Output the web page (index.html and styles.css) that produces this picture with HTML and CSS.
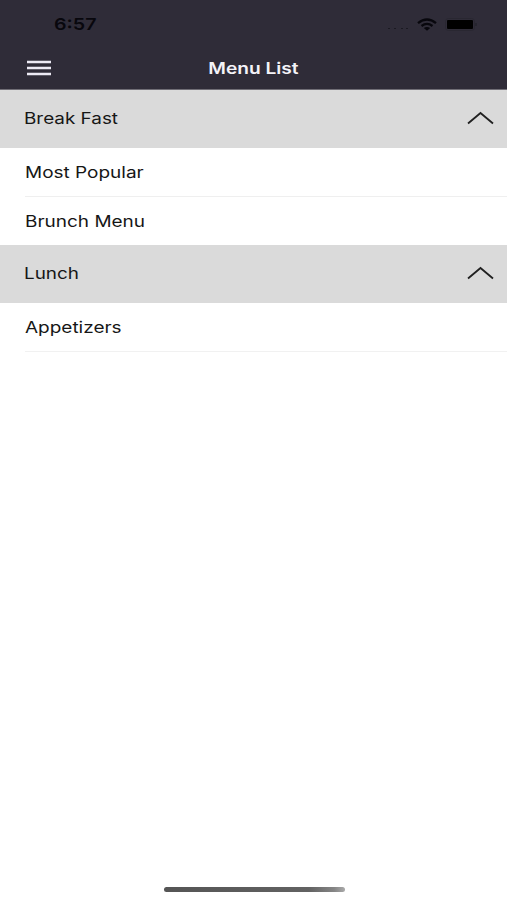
FILE: index.html
```html
<!DOCTYPE html>
<html lang="en">
<head>
<meta charset="utf-8">
<meta name="viewport" content="width=device-width, initial-scale=1">
<title>Menu List</title>
<link rel="stylesheet" href="styles.css">
</head>
<body>
<div class="screen">
  <header class="header">
    <div class="status">
      <span class="time">6:57</span>
      <svg class="indicators" width="90" height="18" viewBox="0 0 90 18" aria-hidden="true">
        <path d="M1 13.500h2M7 13.500h2M14 13.500h2M19 13.500h2" stroke="#1b1a22" stroke-width="1.2"/>
        <g fill="none" stroke="#08070d">
          <path d="M31 8.100Q40 1.100 49 8.100" stroke-width="2.4"/>
          <path d="M34.500 11Q40 6.900 45.500 11" stroke-width="2.2"/>
        </g>
        <path d="M36.800 13.100Q40 10.900 43.200 13.100L40 15.800Z" fill="#08070d"/>
        <rect x="58.500" y="3.500" width="29" height="12" rx="3" fill="none" stroke="#292731"/>
        <rect x="60" y="5" width="26" height="9" rx="1" fill="#000"/>
        <path d="M89 8v3" stroke="#1f1e27"/>
      </svg>
    </div>
    <nav class="navbar">
      <button class="menu-button" aria-label="Menu">
        <svg width="26" height="18" viewBox="0 0 26 18"><path d="M1 3h24M1 9h24M1 15h24"/></svg>
      </button>
      <h1 class="title">Menu List</h1>
    </nav>
  </header>
  <main>
    <section>
      <h2 class="section-head"><span class="label">Break Fast</span>
        <svg class="chevron" width="28" height="14" viewBox="0 0 28 14"><path d="M2 12.500 14.500 2l12.500 10.500"/></svg>
      </h2>
      <ul class="items">
        <li><span class="label">Most Popular</span></li>
        <li><span class="label">Brunch Menu</span></li>
      </ul>
    </section>
    <section>
      <h2 class="section-head"><span class="label">Lunch</span>
        <svg class="chevron" width="28" height="14" viewBox="0 0 28 14"><path d="M2 12.500 14.500 2l12.500 10.500"/></svg>
      </h2>
      <ul class="items open-end">
        <li><span class="label">Appetizers</span></li>
      </ul>
    </section>
  </main>
  <div class="home-bar"></div>
</div>
</body>
</html>
```
FILE: styles.css
```css
* { box-sizing: border-box; }
body { margin: 0; background: #fff; color: #161616; font-family: Inter, "Liberation Sans", sans-serif; }
h1, h2, ul { margin: 0; padding: 0; font-weight: 400; list-style: none; }
.screen { width: 100%; height: 900px; display: flex; flex-direction: column; overflow: hidden; }
.header { height: 90px; background: #2f2c38; border-bottom: 1px solid #706e76; flex: none; }
.status { height: 48px; padding: 0 30px 0 54px; display: flex; justify-content: space-between; align-items: center; }
.time { font-size: 16.5px; font-weight: 600; color: #08070d; transform: scaleX(1.19); transform-origin: left; }
.indicators { display: block; }
.navbar { height: 40px; display: grid; grid-template-columns: 77px 1fr 77px; align-items: center; }
.menu-button { width: 26px; height: 18px; margin-left: 26px; padding: 0; border: 0; background: none; }
.menu-button svg { display: block; }
.menu-button path { fill: none; stroke: #eceaf4; stroke-width: 2.400; }
.title { font-size: 16px; line-height: 20px; font-weight: 600; color: #f4f3f8; text-align: center; transform: scaleX(1.195); }
.label { display: inline-block; font-size: 16px; line-height: 20px; white-space: nowrap; transform: scaleX(1.186); transform-origin: left; }
.section-head { height: 58px; padding: 0 13px 2px 24px; background: #dadada; display: flex; justify-content: space-between; align-items: center; }
.section-head .label { transform: scaleX(1.18); }
.chevron path { fill: none; stroke: #202020; stroke-width: 1.800; }
.items { padding-left: 25px; }
.items li { height: 48px; display: flex; align-items: center; }
.items li + li { height: 49px; border-top: 1px solid #efefef; }
.items.open-end li { height: 49px; border-bottom: 1px solid #f1f1f1; }
.home-bar { width: 181px; height: 5px; margin: auto auto 8px 163.500px; border-radius: 3px; background: linear-gradient(90deg, #555, #626262 80%, #858585 94%, #aaa); }
```
